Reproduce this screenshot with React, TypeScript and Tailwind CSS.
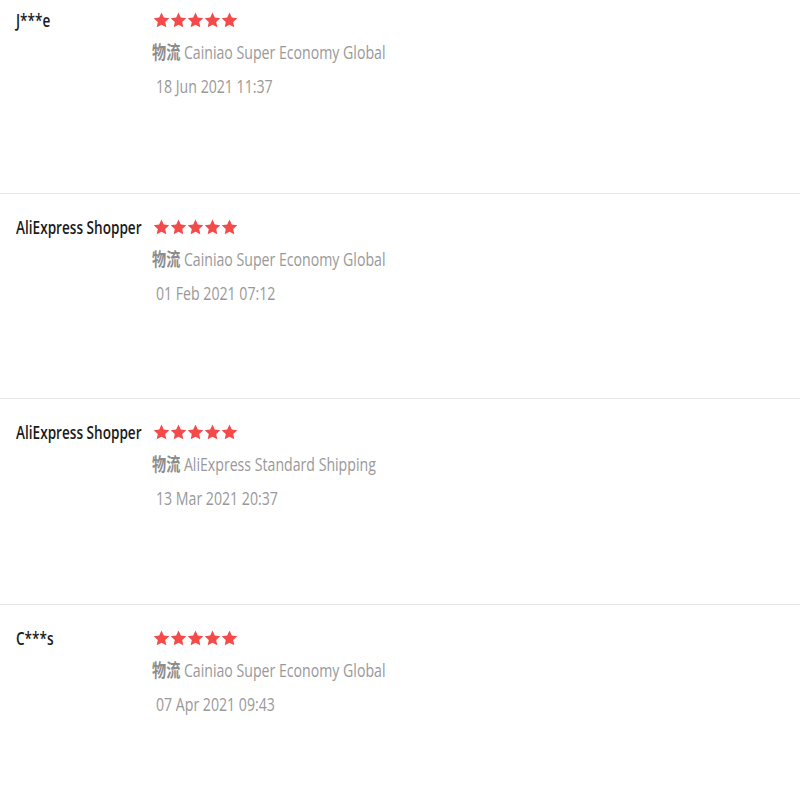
import React from "react";

const rows = [
  { name: "J***e", ship: "Cainiao Super Economy Global", date: "18 Jun 2021 11:37" },
  { name: "AliExpress Shopper", ship: "Cainiao Super Economy Global", date: "01 Feb 2021 07:12" },
  { name: "AliExpress Shopper", ship: "AliExpress Standard Shipping", date: "13 Mar 2021 20:37" },
  { name: "C***s", ship: "Cainiao Super Economy Global", date: "07 Apr 2021 09:43" },
];

function Star() {
  return (
    <svg width="17" height="16" viewBox="0 0 24 23" className="block">
      <path
        d="M12 0.8l3.3 7.2 7.9 0.9-5.9 5.4 1.6 7.8L12 18.2l-6.9 3.9 1.6-7.8L0.8 8.9l7.9-0.9z"
        fill="#f44a4a"
      />
    </svg>
  );
}

export default function App() {
  return (
    <div className="w-[800px] h-[800px] overflow-hidden bg-white" style={{ fontFamily: '"Open Sans", "Noto Sans CJK SC", sans-serif' }}>
      <div className="-mt-[13px]">
        {rows.map((r, i) => (
          <div key={i} className={`flex h-[205.5px] pl-4 pt-[23px] ${i > 0 ? "border-t border-[#e6e6e6]" : ""}`}>
            <div className="w-[136px] shrink-0 -mt-[1px]">
              <span className="inline-block origin-left scale-x-[0.755] whitespace-nowrap text-[18px] leading-[20px] text-[#1a1a1a] font-semibold">
                {r.name}
              </span>
            </div>
            <div className="flex flex-col">
              <div className="flex ml-[1px] mt-[2px]">
                {[0, 1, 2, 3, 4].map((k) => (
                  <Star key={k} />
                ))}
              </div>
              <div className="mt-[13px]">
                <span className="inline-block origin-left scale-x-[0.785] whitespace-nowrap text-[18px] leading-[22px] text-[#999]">
                  <span className="font-bold text-[#8c8c8c]">物流</span> {r.ship}
                </span>
              </div>
              <div className="mt-[10px] ml-[4px]">
                <span className="inline-block origin-left scale-x-[0.785] whitespace-nowrap text-[18px] leading-[22px] text-[#999]">
                  {r.date}
                </span>
              </div>
            </div>
          </div>
        ))}
      </div>
    </div>
  );
}
